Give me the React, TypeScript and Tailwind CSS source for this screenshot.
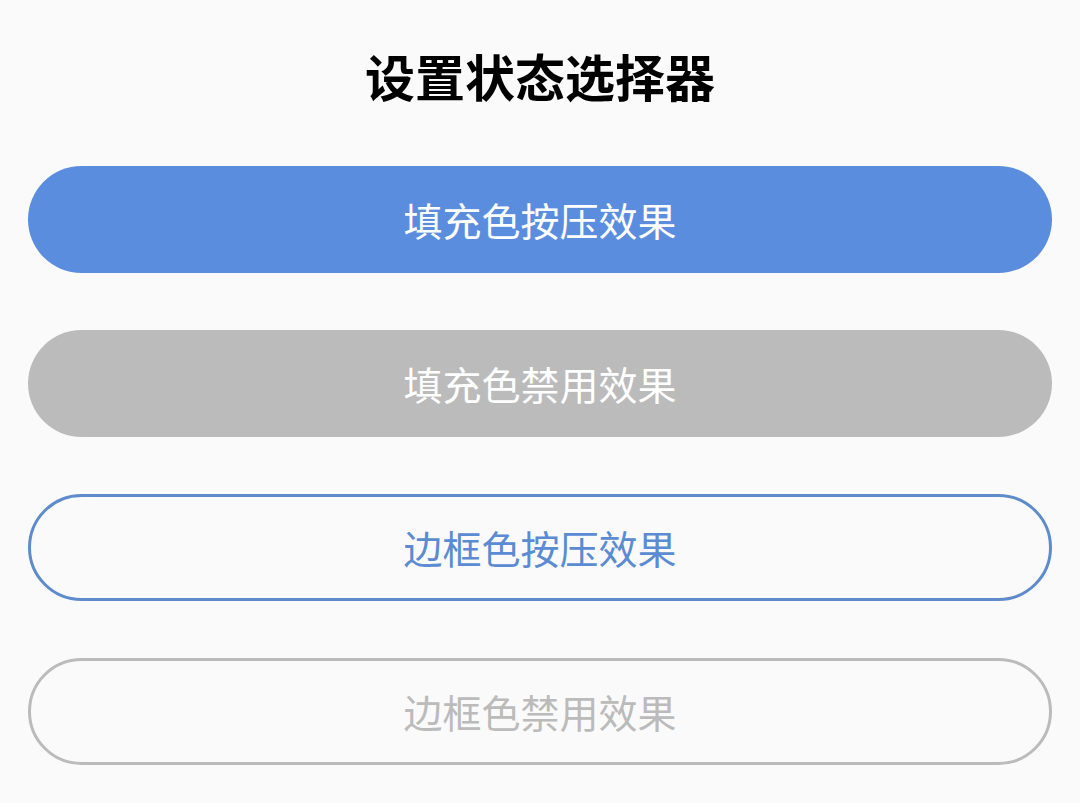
import React from 'react';

const font = { fontFamily: '"Noto Sans CJK SC", "Noto Sans", sans-serif' };

export default function App() {
  return (
    <div className="min-h-[803px] w-full bg-[#fafafa] pt-[25px]" style={font}>
      <h1 className="flex h-[100px] items-center justify-center text-[50px] font-bold leading-none text-black">
        设置状态选择器
      </h1>
      <div className="mt-[41px] flex flex-col gap-[57px] px-[28px]">
        <button className="flex h-[107px] w-full items-center justify-center rounded-full bg-[#5b8ddf] text-[39px] text-white">
          填充色按压效果
        </button>
        <button className="flex h-[107px] w-full items-center justify-center rounded-full bg-[#bbbbbb] text-[39px] text-white">
          填充色禁用效果
        </button>
        <button className="flex h-[107px] w-full items-center justify-center rounded-full border-[3px] border-[#5d8bcb] bg-[#fafafa] text-[39px] text-[#5b8bd2]">
          边框色按压效果
        </button>
        <button className="flex h-[107px] w-full items-center justify-center rounded-full border-[3px] border-[#bbbbbb] bg-[#fafafa] text-[39px] text-[#bbbbbb]">
          边框色禁用效果
        </button>
      </div>
    </div>
  );
}
